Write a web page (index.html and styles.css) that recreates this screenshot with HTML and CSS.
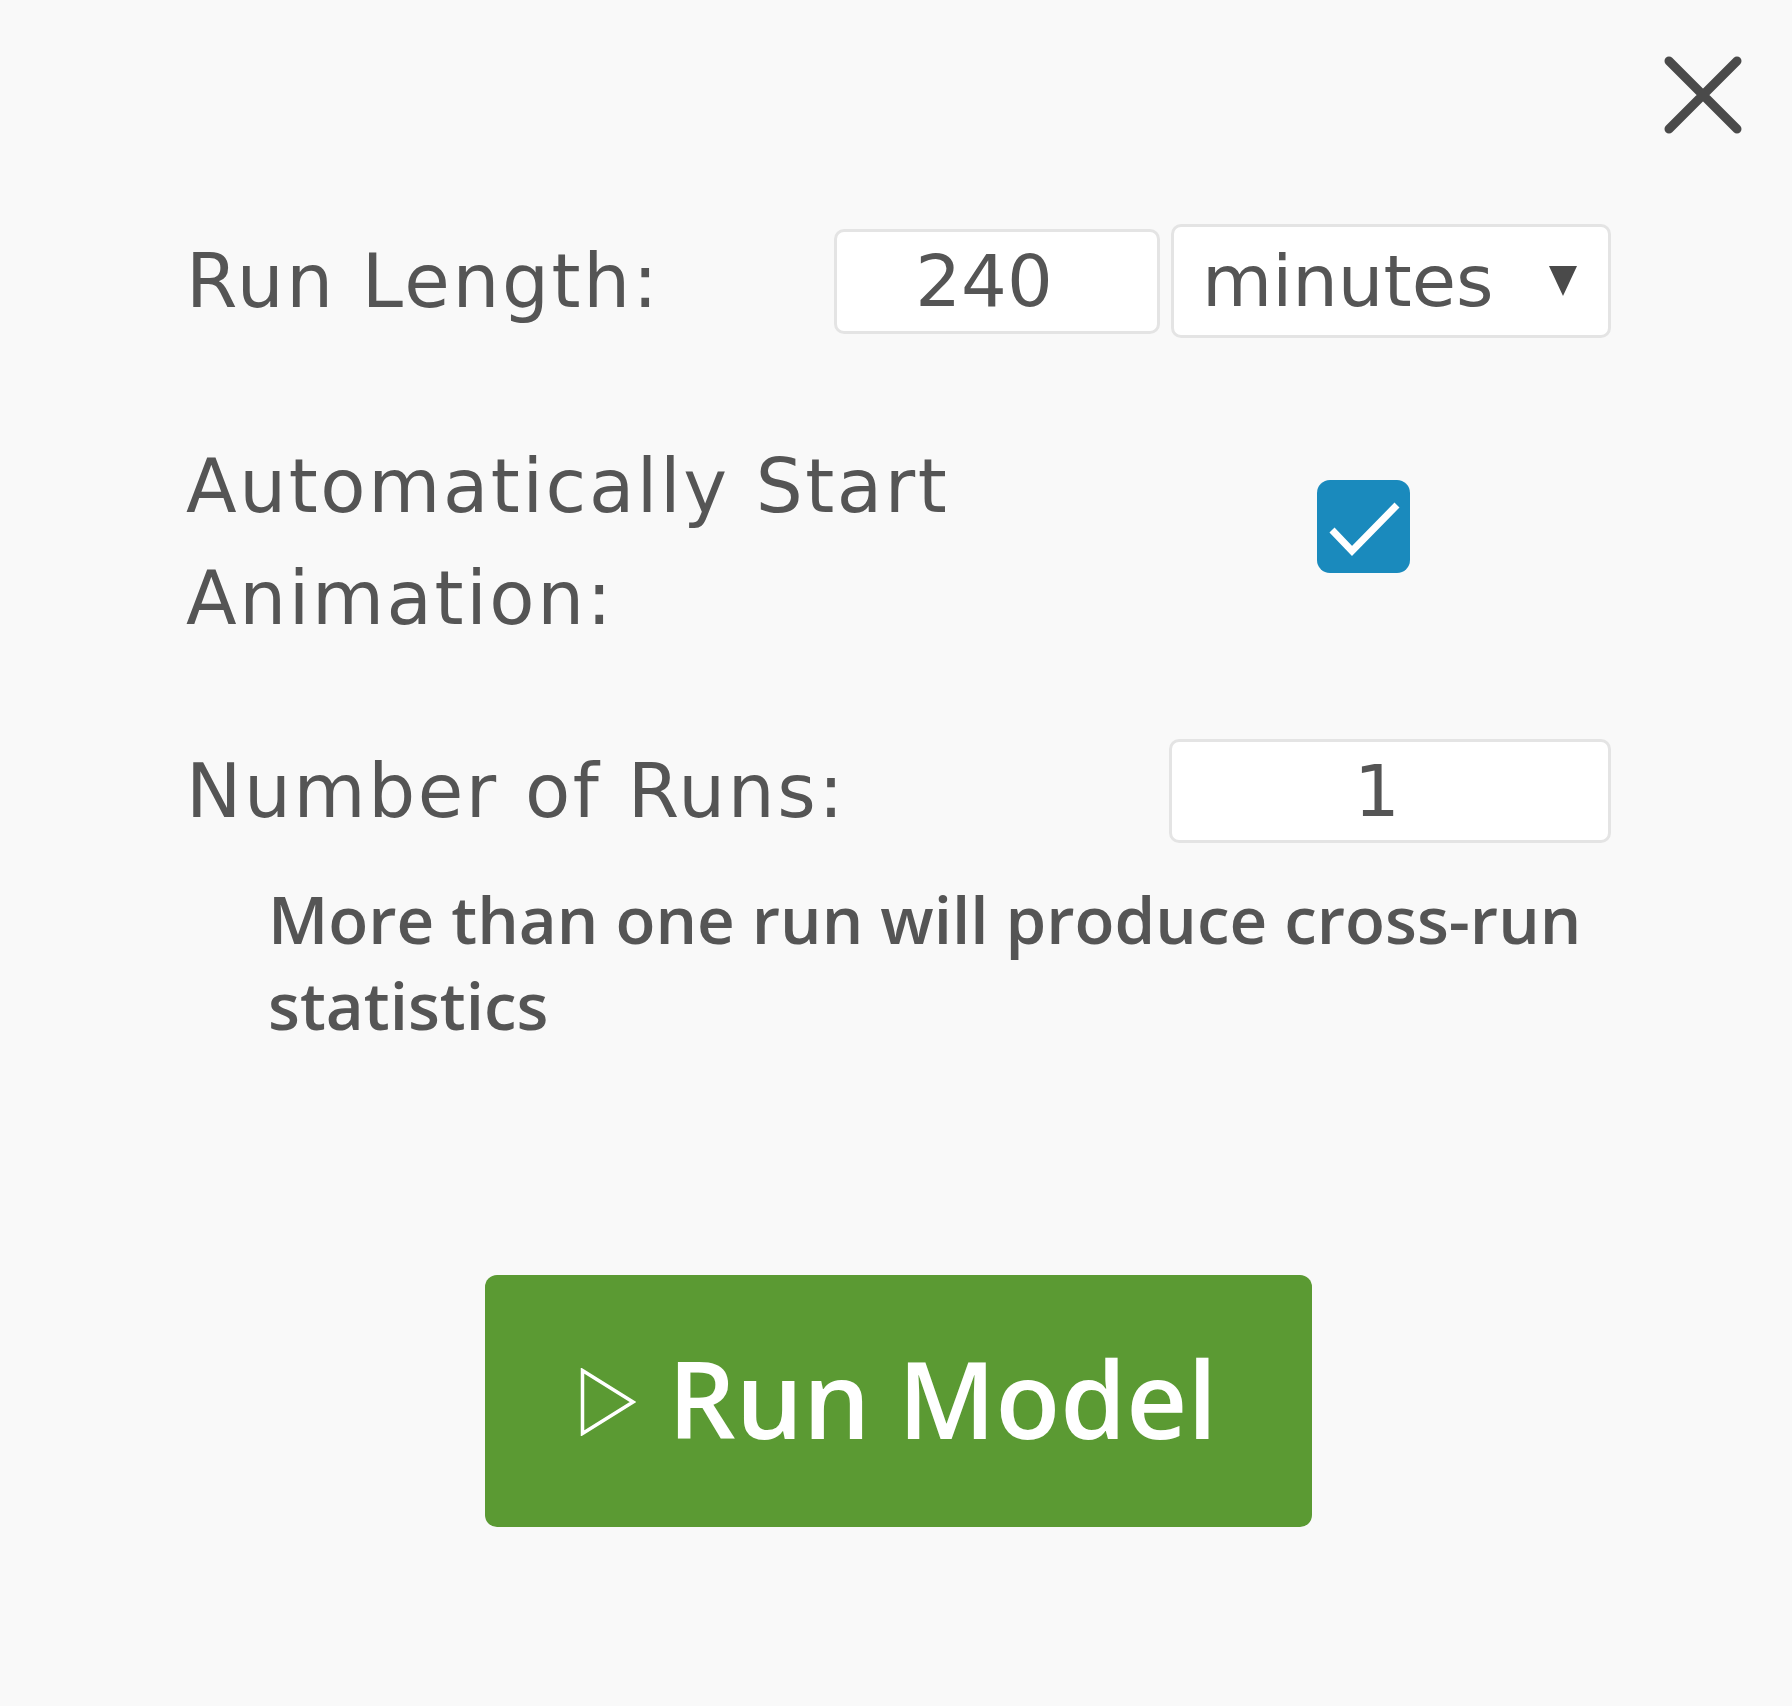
FILE: index.html
```html
<!DOCTYPE html>
<html lang="en">
<head>
<meta charset="utf-8">
<title>Run Settings</title>
<link rel="stylesheet" href="styles.css">
</head>
<body>
<div class="dialog">
  <div class="dialog-header">
    <button class="close-btn" aria-label="Close">
      <svg width="80" height="80" viewBox="0 0 80 80"><path d="M6 6 L74 74 M74 6 L6 74" stroke="#4a4a4a" stroke-width="9" stroke-linecap="round" fill="none"/></svg>
    </button>
  </div>
  <div class="form">
    <div class="row row-length">
      <label class="label">Run Length:</label>
      <div class="controls">
        <input class="field field-num" type="text" value="240">
        <div class="select-wrap">
          <select class="field field-select"><option>minutes</option></select>
        </div>
      </div>
    </div>
    <div class="row row-anim">
      <label class="label label-wrap">Automatically Start Animation:</label>
      <span class="checkbox" role="checkbox" aria-checked="true">
        <svg width="93" height="93" viewBox="0 0 93 93"><path d="M15 50 L35 71 L80 25" stroke="#fff" stroke-width="7" fill="none"/></svg>
      </span>
    </div>
    <div class="row row-runs">
      <label class="label">Number of Runs:</label>
      <input class="field field-runs" type="text" value="1">
    </div>
    <p class="note">More than one run will produce cross-run statistics</p>
    <div class="actions">
      <button class="run-btn">
        <svg class="play" width="56" height="68" viewBox="0 0 56 68"><path d="M2.5 2.5 L53 34 L2.5 65.5 Z" stroke="#fff" stroke-width="3.5" fill="none" stroke-linejoin="miter"/></svg>
        <span>Run Model</span>
      </button>
    </div>
  </div>
</div>
</body>
</html>
```

FILE: styles.css
```css
html, body {
  margin: 0;
  padding: 0;
  background: #f9f9f9;
}
body {
  font-family: "DejaVu Sans", "Liberation Sans", sans-serif;
  color: #555555;
}
.dialog {
  padding: 55px 49px 0 0;
}
.dialog-header {
  display: flex;
  justify-content: flex-end;
}
.close-btn {
  width: 80px;
  height: 80px;
  padding: 0;
  border: 0;
  background: transparent;
  display: block;
}
.close-btn svg { display: block; }
.form {
  padding: 0 132px 0 186px;
}
.row {
  display: flex;
  justify-content: space-between;
  align-items: center;
}
.label {
  font-size: 74px;
  letter-spacing: 2.6px;
  line-height: 112px;
  color: #555555;
}
.row-length {
  margin-top: 89px;
  height: 114px;
}
.controls {
  display: flex;
  align-items: center;
  gap: 11px;
}
.field {
  box-sizing: border-box;
  border: 3px solid #e4e4e4;
  border-radius: 10px;
  background: #ffffff;
  font-family: "DejaVu Sans", "Liberation Sans", sans-serif;
  font-size: 72px;
  color: #555555;
  outline: none;
  margin: 0;
}
.field-num {
  width: 326px;
  height: 105px;
  text-align: center;
  padding: 0 26px 0 0;
}
.select-wrap {
  position: relative;
}
.select-wrap::after {
  content: "";
  position: absolute;
  right: 34px;
  top: 42px;
  border-left: 14px solid transparent;
  border-right: 14px solid transparent;
  border-top: 30px solid #4a4a4a;
  pointer-events: none;
}
.field-select {
  -webkit-appearance: none;
  appearance: none;
  width: 440px;
  height: 114px;
  padding: 0 0 0 28px;
  display: block;
}
.row-anim {
  margin-top: 92px;
  align-items: flex-start;
}
.label-wrap {
  max-width: 860px;
}
.checkbox {
  display: block;
  width: 93px;
  height: 93px;
  border-radius: 13px;
  background: #1a8abd;
  margin-top: 50px;
  margin-right: 201px;
}
.checkbox svg { display: block; }
.row-runs {
  margin-top: 85px;
  height: 104px;
}
.field-runs {
  width: 442px;
  height: 104px;
  text-align: center;
  padding: 0 26px 0 0;
}
.note {
  margin: 33px 0 0 82px;
  font-family: "Open Sans", "DejaVu Sans", sans-serif;
  font-weight: 600;
  font-size: 65.5px;
  line-height: 86px;
  color: #555555;
}
.actions {
  display: flex;
  justify-content: center;
  margin-top: 227px;
}
.run-btn {
  width: 827px;
  height: 252px;
  border: 0;
  border-radius: 12px;
  background: #5b9a33;
  color: #ffffff;
  display: flex;
  align-items: center;
  justify-content: center;
  gap: 32px;
  font-family: "Open Sans", "DejaVu Sans", sans-serif;
  font-weight: 600;
  font-size: 106px;
  padding: 0 0 6px 0;
}
.play { display: block; margin-top: 8px; }
```
